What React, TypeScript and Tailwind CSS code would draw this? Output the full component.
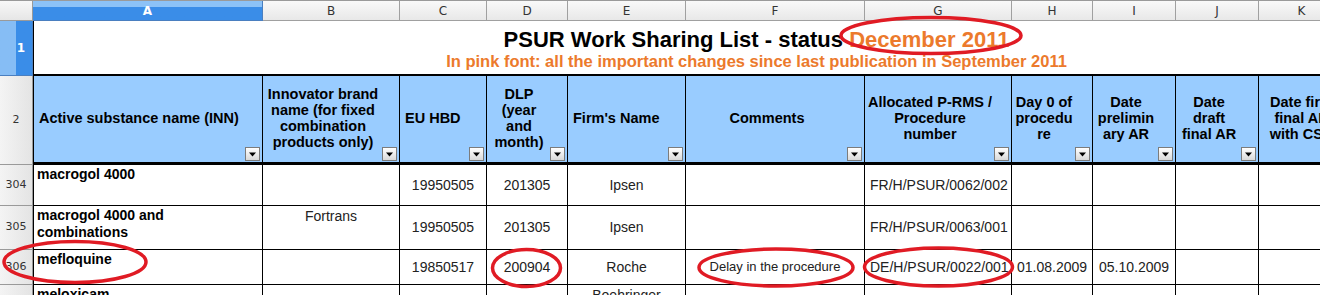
import {JSX} from "react";

const colW = ["w-[230px]", "w-[137px]", "w-[87px]", "w-[81px]", "w-[118px]", "w-[179px]", "w-[147px]", "w-[81px]", "w-[83px]", "w-[83px]", "w-[86px]", "w-[220px]"];
const letters = ["A", "B", "C", "D", "E", "F", "G", "H", "I", "J", "K", "L"];

type Head = { lines: string[]; left?: boolean; drop?: boolean };

const heads: Head[] = [
    {lines: ["Active substance name (INN)"], left: true, drop: true},
    {lines: ["Innovator brand", "name (for fixed", "combination", "products only)"], drop: true},
    {lines: ["EU HBD"], left: true, drop: true},
    {lines: ["DLP", "(year", "and", "month)"], drop: true},
    {lines: ["Firm's Name"], left: true, drop: true},
    {lines: ["Comments"], drop: true},
    {lines: ["Allocated P-RMS /", "Procedure", "number"], drop: true},
    {lines: ["Day 0 of", "procedu", "re"], drop: true},
    {lines: ["Date", "prelimin", "ary AR"], drop: true},
    {lines: ["Date", "draft", "final AR"], drop: true},
    {lines: ["Date first", "final AR", "with CSR"]},
    {lines: [""]},
];

type Row = { num: string; h: string; cells: string[] };

const rows: Row[] = [
    {num: "304", h: "h-[41px]", cells: ["macrogol 4000", "", "19950505", "201305", "Ipsen", "", "FR/H/PSUR/0062/002", "", "", "", "", ""]},
    {num: "305", h: "h-[44px]", cells: ["macrogol 4000 and\ncombinations", "Fortrans", "19950505", "201305", "Ipsen", "", "FR/H/PSUR/0063/001", "", "", "", "", ""]},
    {num: "306", h: "h-[35px]", cells: ["mefloquine", "", "19850517", "200904", "Roche", "Delay in the procedure", "DE/H/PSUR/0022/001", "01.08.2009", "05.10.2009", "", "", ""]},
    {num: "307", h: "h-[40px]", cells: ["meloxicam", "", "", "", "Boehringer Ingelheim", "", "", "", "", "", "", ""]},
];

function DropButton(): JSX.Element {
    return (
        <div className="absolute bottom-[1px] right-[2px] flex h-[14px] w-[15px] items-center justify-center border border-[#7c7c7c] bg-gradient-to-b from-white to-[#d9d9d9]">
            <svg width="9" height="5" viewBox="0 0 9 5"><path d="M1 0.5 L8 0.5 L4.5 4.5 Z" fill="#000"/></svg>
        </div>
    );
}

function DataCell({i, text}: { i: number; text: string }): JSX.Element {
    const w = colW[i];
    if (i === 0) {
        return <div className={`${w} shrink-0 whitespace-pre-line border-r border-b border-l border-black px-[3px] pt-[1px] text-[14px] font-bold leading-[17px] text-black`}>{text}</div>;
    }
    if (i === 1 || i === 4 && text.startsWith("Boeh")) {
        return <div className={`${w} shrink-0 border-r border-b border-black pt-[2px] text-center text-[14px] leading-[17px] text-[#222]`}>{text}</div>;
    }
    if (i === 5) {
        return <div className={`${w} shrink-0 flex items-center justify-center border-r border-b border-black text-[13px] text-[#222]`}>{text}</div>;
    }
    if (i === 6) {
        return <div className={`${w} shrink-0 flex items-center border-r border-b border-black pl-[5px] text-[14px] text-[#222]`}>{text}</div>;
    }
    return <div className={`${w} shrink-0 flex items-center justify-center border-r border-b border-black text-[14px] text-[#222]`}>{text}</div>;
}

export default function App(): JSX.Element {
    return (
        <div className="relative h-[295px] w-[1320px] overflow-hidden bg-white" style={{fontFamily: '"Liberation Sans", Arial, sans-serif'}}>
            {/* column letters */}
            <div className="flex h-[21px] border-t border-[#9a9a9a]">
                <div className="w-[33px] shrink-0 border-r border-b border-[#9a9a9a] bg-gradient-to-b from-[#f8f8f8] to-[#e6e6e6]"/>
                {letters.map((l, i) => (
                    <div key={l}
                         className={i === 0
                             ? `${colW[i]} shrink-0 flex items-center justify-center border-r border-b border-[#4a7fc0] bg-gradient-to-b from-[#8cc2f7] from-30% to-[#3a8de8] to-30% text-[12px] font-bold text-white`
                             : `${colW[i]} shrink-0 flex items-center justify-center border-r border-b border-[#a0a0a0] bg-gradient-to-b from-[#f9f9f9] to-[#e8e8e8] text-[12px] text-[#333]`}
                         style={{fontFamily: '"DejaVu Sans", sans-serif'}}>{l}</div>
                ))}
            </div>

            {/* row 1: title */}
            <div className="flex h-[55px]">
                <div className="flex w-[33px] shrink-0 border-b border-r border-[#4a7fc0] bg-gradient-to-r from-[#86bdf5] from-50% to-[#3a8de8] to-50% items-center justify-end pr-[7px] text-[12px] font-bold text-white"
                     style={{fontFamily: '"DejaVu Sans", sans-serif'}}>1</div>
                <div className="flex w-[1446px] shrink-0 flex-col items-center justify-center border-l border-b-2 border-black pt-[3px]">
                    <div className="text-[22px] font-bold leading-[24px] text-black">
                        PSUR Work Sharing List - status <span className="text-[#ec7a2c]">December 2011</span>
                    </div>
                    <div className="text-[16.5px] font-bold leading-[18px] text-[#ec7a2c]">
                        In pink font: all the important changes since last publication in September 2011
                    </div>
                </div>
            </div>

            {/* row 2: headers */}
            <div className="flex h-[89px]">
                <div className="flex w-[33px] shrink-0 items-center justify-center border-r border-b border-[#9a9a9a] bg-gradient-to-r from-[#f4f4f4] to-[#e4e4e4] text-[11px] text-[#333]"
                     style={{fontFamily: '"DejaVu Sans", sans-serif'}}>2</div>
                {heads.map((h, i) => (
                    <div key={i}
                         className={`${colW[i]} relative shrink-0 flex flex-col justify-center border-r border-b-[3px] border-black bg-[#99ccff] pb-[2px] text-[14.5px] font-bold leading-[16px] text-black ${i === 0 ? "border-l" : ""} ${h.left ? "items-start pl-[5px]" : h.drop ? "items-center pr-[16px]" : "items-center"}`}>
                        {h.lines.map((l, k) => <div key={k} className="whitespace-nowrap">{l}</div>)}
                        {h.drop ? <DropButton/> : null}
                    </div>
                ))}
            </div>

            {/* data rows */}
            {rows.map((r) => (
                <div key={r.num} className={`flex ${r.h}`}>
                    <div className="flex w-[33px] shrink-0 items-center justify-center border-r border-b border-[#9a9a9a] bg-gradient-to-r from-[#f4f4f4] to-[#e4e4e4] text-[11px] text-[#333]"
                         style={{fontFamily: '"DejaVu Sans", sans-serif'}}>{r.num}</div>
                    {r.cells.map((c, i) => <DataCell key={i} i={i} text={c}/>)}
                </div>
            ))}

            {/* red hand-drawn marks */}
            <svg className="pointer-events-none absolute inset-0" width="1320" height="295">
                <g fill="none" stroke="#e01b24" strokeWidth="3.5">
                    <ellipse cx="931" cy="35.5" rx="90" ry="18"/>
                    <ellipse cx="75" cy="262" rx="71" ry="20.5"/>
                    <ellipse cx="526.5" cy="268" rx="34" ry="18.5"/>
                    <ellipse cx="776" cy="267.5" rx="77" ry="18.5"/>
                    <ellipse cx="938.5" cy="267" rx="74" ry="19"/>
                </g>
            </svg>
        </div>
    );
}
